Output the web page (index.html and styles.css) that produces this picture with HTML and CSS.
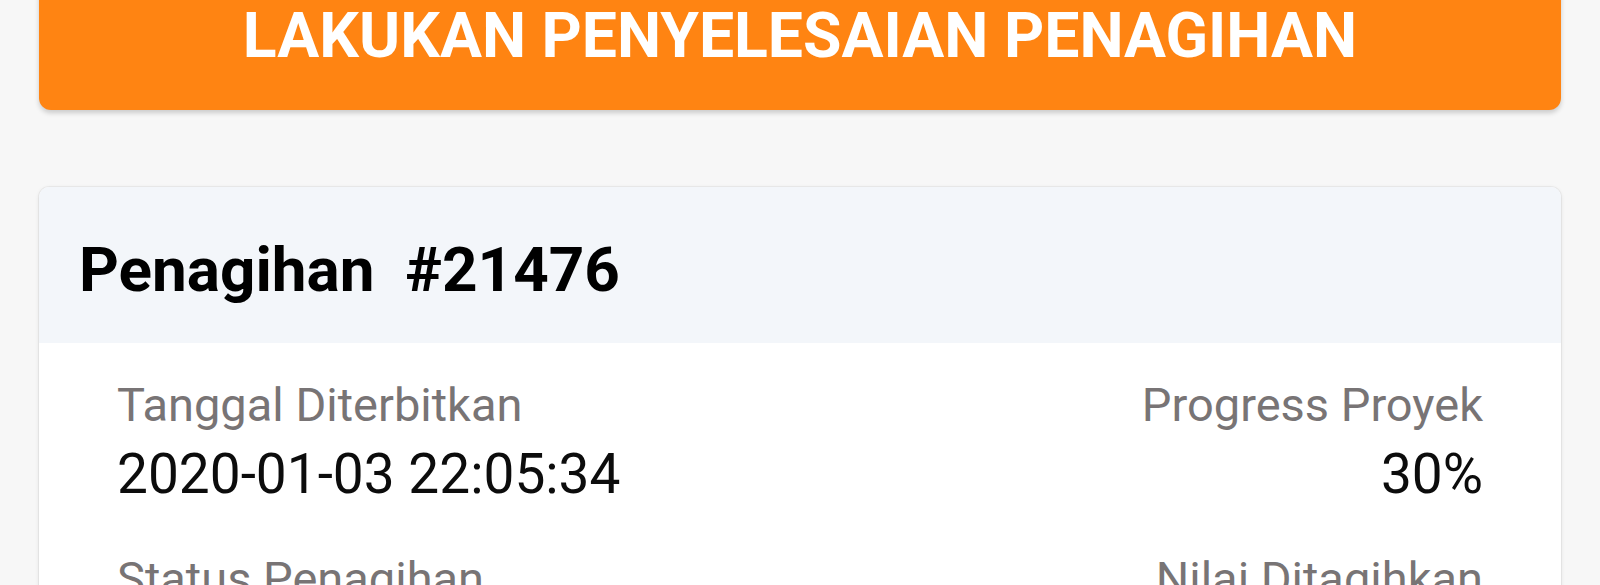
FILE: index.html
```html
<!DOCTYPE html>
<html lang="id">
<head>
<meta charset="utf-8">
<title>Penagihan</title>
<link rel="stylesheet" href="styles.css">
</head>
<body>
<main class="page">
  <button class="action-btn" type="button">LAKUKAN PENYELESAIAN PENAGIHAN</button>
  <section class="card">
    <header class="card-head">
      <h1 class="card-title">Penagihan  #21476</h1>
    </header>
    <div class="card-body">
      <div class="field">
        <div class="label">Tanggal Diterbitkan</div>
        <div class="value">2020-01-03 22:05:34</div>
      </div>
      <div class="field right">
        <div class="label">Progress Proyek</div>
        <div class="value">30%</div>
      </div>
      <div class="field">
        <div class="label">Status Penagihan</div>
      </div>
      <div class="field right">
        <div class="label">Nilai Ditagihkan</div>
      </div>
    </div>
  </section>
</main>
</body>
</html>
```

FILE: styles.css
```css
html, body {
  margin: 0;
  padding: 0;
  height: 585px;
  overflow: hidden;
  background: #f7f7f7;
  font-family: Roboto, "Noto Sans", sans-serif;
}

.page {
  display: flex;
  flex-direction: column;
  padding: 0 39px;
}

.action-btn {
  margin-top: -38px;
  height: 148px;
  border: none;
  border-radius: 12px;
  background: #ff8412;
  color: #ffffff;
  font-family: Roboto, "Noto Sans", sans-serif;
  font-weight: 700;
  font-size: 62.5px;
  line-height: 74px;
  display: flex;
  align-items: center;
  justify-content: center;
  padding: 0;
  box-shadow: 0 3px 5px rgba(0, 0, 0, 0.18);
}

.card {
  margin-top: 77px;
  background: #ffffff;
  border-radius: 10px;
  overflow: hidden;
  box-shadow: 0 0 0 1px rgba(0, 0, 0, 0.04), 0 1px 4px rgba(0, 0, 0, 0.10);
}

.card-head {
  background: #f3f6fa;
  padding: 47px 40px 37px;
}

.card-title {
  margin: 0;
  font-size: 62px;
  line-height: 72px;
  font-weight: 700;
  color: #000000;
  white-space: pre;
}

.card-body {
  display: grid;
  grid-template-columns: 1fr 1fr;
  row-gap: 46px;
  padding: 35px 78px 40px;
}

.field {
  display: flex;
  flex-direction: column;
  gap: 10px;
}

.field.right {
  align-items: flex-end;
  text-align: right;
}

.label {
  font-size: 47px;
  line-height: 54px;
  color: #787475;
}

.value {
  font-size: 55px;
  line-height: 64px;
  color: #0c0c0c;
}
```
